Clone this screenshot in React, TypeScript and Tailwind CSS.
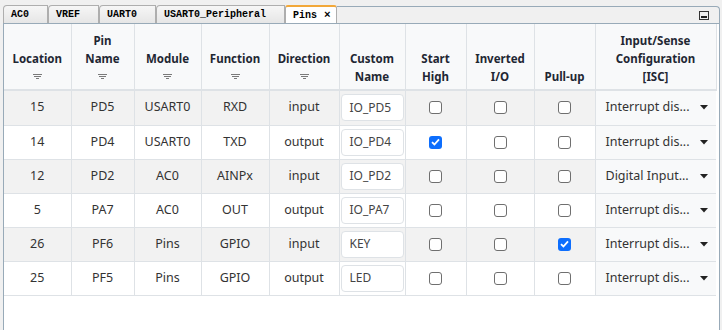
import React from 'react';

type Row = {
  loc: string;
  pin: string;
  module: string;
  fn: string;
  dir: string;
  name: string;
  high: boolean;
  inv: boolean;
  pull: boolean;
  isc: string;
};

const rows: Row[] = [
  { loc: '15', pin: 'PD5', module: 'USART0', fn: 'RXD', dir: 'input', name: 'IO_PD5', high: false, inv: false, pull: false, isc: 'Interrupt dis...' },
  { loc: '14', pin: 'PD4', module: 'USART0', fn: 'TXD', dir: 'output', name: 'IO_PD4', high: true, inv: false, pull: false, isc: 'Interrupt dis...' },
  { loc: '12', pin: 'PD2', module: 'AC0', fn: 'AINPx', dir: 'input', name: 'IO_PD2', high: false, inv: false, pull: false, isc: 'Digital Input...' },
  { loc: '5', pin: 'PA7', module: 'AC0', fn: 'OUT', dir: 'output', name: 'IO_PA7', high: false, inv: false, pull: false, isc: 'Interrupt dis...' },
  { loc: '26', pin: 'PF6', module: 'Pins', fn: 'GPIO', dir: 'input', name: 'KEY', high: false, inv: false, pull: true, isc: 'Interrupt dis...' },
  { loc: '25', pin: 'PF5', module: 'Pins', fn: 'GPIO', dir: 'output', name: 'LED', high: false, inv: false, pull: false, isc: 'Interrupt dis...' },
];

const tabs = ['AC0', 'VREF', 'UART0', 'USART0_Peripheral'];

const FilterIcon = () => (
  <div className="h-[18px] pt-[6px]">
    <svg width="9" height="5" viewBox="0 0 9 5" className="mx-auto block">
      <rect x="0" y="0" width="9" height="1" fill="#7a7a7a" />
      <rect x="1" y="2" width="7" height="1" fill="#7a7a7a" />
      <rect x="3" y="4" width="3" height="1" fill="#7a7a7a" />
    </svg>
  </div>
);

const Checkbox = ({ checked }: { checked: boolean }) =>
  checked ? (
    <span className="mx-auto flex w-[13px] h-[13px] rounded-[3px] bg-[#0d6efd] items-center justify-center">
      <svg width="9" height="8" viewBox="0 0 9 8">
        <path d="M1 4.2 L3.4 6.5 L8 1.3" stroke="white" strokeWidth="1.8" fill="none" />
      </svg>
    </span>
  ) : (
    <span className="mx-auto block w-[13px] h-[13px] rounded-[3px] border border-[#6f6f6f] bg-white" />
  );

const headers: { lines: string[]; filter: boolean; w: string }[] = [
  { lines: ['Location'], filter: true, w: 'w-[67px]' },
  { lines: ['Pin', 'Name'], filter: true, w: 'w-[63px]' },
  { lines: ['Module'], filter: true, w: 'w-[67px]' },
  { lines: ['Function'], filter: true, w: 'w-[68px]' },
  { lines: ['Direction'], filter: true, w: 'w-[70px]' },
  { lines: ['Custom', 'Name'], filter: false, w: 'w-[66px]' },
  { lines: ['Start', 'High'], filter: false, w: 'w-[61px]' },
  { lines: ['Inverted', 'I/O'], filter: false, w: 'w-[68px]' },
  { lines: ['Pull-up'], filter: false, w: 'w-[61px]' },
  { lines: ['Input/Sense', 'Configuration', '[ISC]'], filter: false, w: 'w-[121px]' },
];

const cell = 'border-r border-b border-[#dee2e6]';

export default function App() {
  return (
    <div
      className="w-[722px] h-[330px] bg-[#f0f0f0] flex flex-col overflow-hidden"
      style={{ fontFamily: '"Noto Sans", "Open Sans", sans-serif' }}
    >
      <div className="h-[23px] flex items-end pl-[3px] pr-[2px]">
        {tabs.map((t) => (
          <div
            key={t}
            className="h-[18px] pl-[7px] pr-[18px] flex items-center border border-b-0 border-[#aeaeae] rounded-tl-[4px] bg-gradient-to-b from-[#f6f6f6] to-[#e6e6e6] text-[10px] font-bold text-black"
            style={{ fontFamily: '"Liberation Mono", monospace' }}
          >
            {t}
          </div>
        ))}
        <div
          className="h-[18px] pl-[7px] pr-[5px] flex items-center gap-[7px] border border-b-0 border-[#aeaeae] border-t-2 border-t-[#f2a83a] rounded-t-[3px] bg-white text-[10px] font-bold text-black"
          style={{ fontFamily: '"Liberation Mono", monospace' }}
        >
          <span>Pins</span>
          <span className="text-[11px] leading-none">×</span>
        </div>
        <div className="flex-1 h-[17px] border-t border-r border-[#98aab8] rounded-tr-[4px] flex items-center justify-end pr-[10px]">
          <span className="w-[10px] h-[9px] border border-[#333] flex items-end justify-center pb-[1px]">
            <span className="w-[6px] h-[2px] bg-[#222]" />
          </span>
        </div>
      </div>
      <div className="flex-1 ml-[3px] mr-[2px] bg-white border border-b-0 border-[#98aab8] overflow-hidden">
        <table className="table-fixed border-collapse w-[712px] text-[12.5px] text-[#333]">
          <thead>
            <tr className="bg-[#f8f9fa]">
              {headers.map((h, i) => (
                <th
                  key={i}
                  className={`${h.w} h-[66px] align-bottom pb-[3px] border-r border-b-2 border-[#dee2e6] font-bold text-[11.5px] leading-[18px] text-[#1f2733] text-center`}
                >
                  {h.lines.map((l) => (
                    <div key={l}>{l}</div>
                  ))}
                  {h.filter && <FilterIcon />}
                </th>
              ))}
            </tr>
          </thead>
          <tbody>
            {rows.map((r, i) => (
              <tr key={i} className={i % 2 === 0 ? 'bg-[#f2f2f2]' : 'bg-white'}>
                <td className={`${i === 0 ? 'h-[35px]' : 'h-[34px]'} ${cell} text-center`}>{r.loc}</td>
                <td className={`${cell} text-center`}>{r.pin}</td>
                <td className={`${cell} text-center`}>{r.module}</td>
                <td className={`${cell} text-center`}>{r.fn}</td>
                <td className={`${cell} text-center`}>{r.dir}</td>
                <td className={`${cell} px-[1px]`}>
                  <div className="h-[27px] bg-white border border-[#dee2e6] rounded-[4px] px-[8px] flex items-center text-[12px] text-[#444]">
                    {r.name}
                  </div>
                </td>
                <td className={cell}>
                  <Checkbox checked={r.high} />
                </td>
                <td className={cell}>
                  <Checkbox checked={r.inv} />
                </td>
                <td className={cell}>
                  <Checkbox checked={r.pull} />
                </td>
                <td className="border-b border-[#dee2e6] bg-[#f8f9fa] pl-[10px] pr-[8px]">
                  <div className="flex items-center justify-between">
                    <span>{r.isc}</span>
                    <svg width="8" height="5" viewBox="0 0 8 5">
                      <path d="M0 0 L8 0 L4 4.5 Z" fill="#222" />
                    </svg>
                  </div>
                </td>
              </tr>
            ))}
          </tbody>
        </table>
      </div>
    </div>
  );
}
